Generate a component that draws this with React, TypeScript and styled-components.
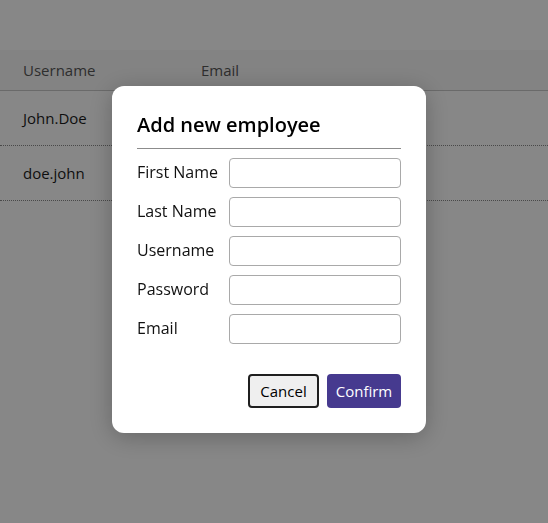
import React from "react";
import styled, { createGlobalStyle } from "styled-components";

interface Employee {
  username: string;
  email: string;
}

const employees: Employee[] = [
  { username: "John.Doe", email: "" },
  { username: "doe.john", email: "" },
];

const fields = ["First Name", "Last Name", "Username", "Password", "Email"];

function App() {
  return (
    <>
      <GlobalStyle />
      <Page>
        <Table>
          <thead>
            <HeadRow>
              <HeadCell $width={178}>Username</HeadCell>
              <HeadCell>Email</HeadCell>
            </HeadRow>
          </thead>
          <tbody>
            {employees.map((employee, index) => (
              <BodyRow key={index}>
                <Cell>{employee.username}</Cell>
                <Cell>{employee.email}</Cell>
              </BodyRow>
            ))}
          </tbody>
        </Table>
      </Page>
      <Overlay>
        <Modal>
          <Title>Add new employee</Title>
          <Form>
            {fields.map((field) => (
              <React.Fragment key={field}>
                <Label htmlFor={field}>{field}</Label>
                <Input id={field} type={field === "Password" ? "password" : "text"} />
              </React.Fragment>
            ))}
          </Form>
          <Actions>
            <CancelButton>Cancel</CancelButton>
            <ConfirmButton>Confirm</ConfirmButton>
          </Actions>
        </Modal>
      </Overlay>
    </>
  );
}

export default App;

const GlobalStyle = createGlobalStyle`
  html, body {
    margin: 0;
    padding: 0;
    background: #ffffff;
    font-family: "Open Sans", "Liberation Sans", sans-serif;
  }
`;

const Page = styled.div`
  padding-top: 50px;
  min-height: 523px;
  box-sizing: border-box;
`;

const Table = styled.table`
  width: 100%;
  border-collapse: collapse;
  font-size: 15px;
`;

const HeadRow = styled.tr`
  background: #f8f8f8;
  border-bottom: 1px solid #c8c8c8;
`;

const HeadCell = styled.th<{ $width?: number }>`
  height: 40px;
  padding: 0 0 0 23px;
  text-align: left;
  font-weight: 400;
  color: #575757;
  width: ${(p) => (p.$width ? `${p.$width - 23}px` : "auto")};
`;

const BodyRow = styled.tr`
  border-bottom: 1px dotted #8a8a8a;
`;

const Cell = styled.td`
  height: 54px;
  padding: 0 0 0 23px;
  color: #1c1c1c;
`;

const Overlay = styled.div`
  position: fixed;
  inset: 0;
  background: rgba(0, 0, 0, 0.47);
  display: flex;
  align-items: center;
  justify-content: center;
  padding-right: 10px;
  padding-bottom: 4px;
`;

const Modal = styled.div`
  width: 314px;
  box-sizing: border-box;
  padding: 24px 25px 25px;
  background: #ffffff;
  border-radius: 12px;
  box-shadow: 0 4px 24px rgba(0, 0, 0, 0.25);
`;

const Title = styled.h2`
  margin: 0;
  padding-bottom: 8px;
  font-size: 20px;
  line-height: 30px;
  font-weight: 600;
  color: #000000;
  border-bottom: 1px solid #8c8c8c;
`;

const Form = styled.div`
  display: grid;
  grid-template-columns: 92px 172px;
  row-gap: 9px;
  align-items: center;
  margin-top: 9px;
`;

const Label = styled.label`
  font-size: 16px;
  line-height: 22px;
  color: #111111;
  padding-bottom: 2px;
`;

const Input = styled.input`
  height: 30px;
  box-sizing: border-box;
  border: 1px solid #a9a9a9;
  border-radius: 4px;
  padding: 0 8px;
  font: inherit;
`;

const Actions = styled.div`
  display: flex;
  justify-content: flex-end;
  gap: 8px;
  margin-top: 30px;
`;

const BaseButton = styled.button`
  height: 34px;
  box-sizing: border-box;
  border-radius: 4px;
  font-family: inherit;
  font-size: 15px;
  cursor: pointer;
`;

const CancelButton = styled(BaseButton)`
  width: 71px;
  background: #efefef;
  color: #000000;
  border: 2px solid #1f1f1f;
`;

const ConfirmButton = styled(BaseButton)`
  width: 74px;
  background: #463a8f;
  color: #ffffff;
  border: none;
`;
